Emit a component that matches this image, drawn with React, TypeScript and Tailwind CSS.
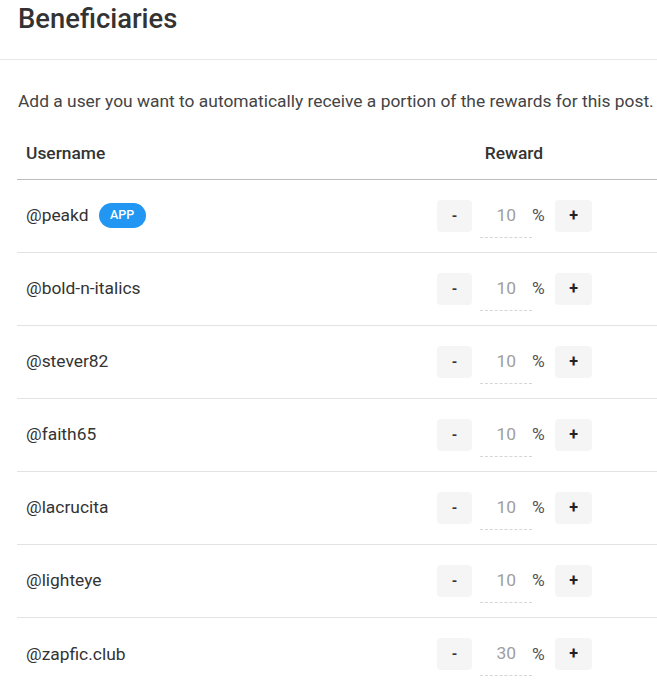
import React from "react";

type Beneficiary = {
  name: string;
  weight: number;
  app?: boolean;
};

const beneficiaries: Beneficiary[] = [
  { name: "peakd", weight: 10, app: true },
  { name: "bold-n-italics", weight: 10 },
  { name: "stever82", weight: 10 },
  { name: "faith65", weight: 10 },
  { name: "lacrucita", weight: 10 },
  { name: "lighteye", weight: 10 },
  { name: "zapfic.club", weight: 30 },
];

const RewardControl = ({ value }: { value: number }) => {
  return (
    <div className="flex items-center">
      <button className="w-[35px] h-[32px] rounded bg-[#f5f5f5] text-[#333] text-sm font-bold leading-none">
        -
      </button>
      <div className="ml-[8px] w-[52px] h-[38px] flex items-center justify-end pr-[16px] border-b border-dashed border-[#d6d6d6] translate-y-[3px]">
        <span className="text-[17.4px] text-[#9e9e9e] -translate-y-[3px]">{value}</span>
      </div>
      <span className="text-[17.4px] text-[#555] w-[14px]">%</span>
      <button className="ml-[9px] w-[37px] h-[32px] rounded bg-[#f5f5f5] text-[#222] text-base font-bold leading-none">
        +
      </button>
    </div>
  );
};

const App = () => {
  return (
    <div className="w-[657px] h-[686px] overflow-hidden bg-white text-[#333] font-['Roboto',sans-serif]">
      {/* Header */}
      <div className="h-[60px] border-b border-[#e8e8e8] px-[18px] pt-[2px]">
        <h2 className="text-[27.4px] leading-[34px] font-medium text-[#333]">
          Beneficiaries
        </h2>
      </div>

      {/* Body */}
      <div className="pl-[17px]">
        <p className="pl-[1px] pt-[29px] text-[17.4px] leading-[24px] text-[#444] whitespace-nowrap">
          Add a user you want to automatically receive a portion of the rewards for this post.
        </p>

        <table className="mt-[15px] w-[640px] border-collapse">
          <thead>
            <tr className="border-b border-[#bdbdbd]">
              <th className="h-[51px] pl-[9px] text-left text-[17.4px] font-medium text-[#333]">
                Username
              </th>
              <th className="w-[272px] text-center text-[17.4px] font-medium text-[#333] pr-[14px]">
                Reward
              </th>
            </tr>
          </thead>
          <tbody>
            {beneficiaries.map((b, i) => (
              <tr
                key={b.name}
                className={i < beneficiaries.length - 1 ? "border-b border-[#e3e3e3]" : ""}
              >
                <td className="h-[73px] pl-[9px] text-[17.4px] text-[#333]">
                  <div className="flex items-center">
                    <span>@{b.name}</span>
                    {b.app && (
                      <span className="ml-[10px] h-[25px] w-[47px] rounded-full bg-[#2196f3] text-white text-[12.5px] font-medium flex items-center justify-center">
                        APP
                      </span>
                    )}
                  </div>
                </td>
                <td className="pl-[52px]">
                  <RewardControl value={b.weight} />
                </td>
              </tr>
            ))}
          </tbody>
        </table>
      </div>
    </div>
  );
};

export default App;
